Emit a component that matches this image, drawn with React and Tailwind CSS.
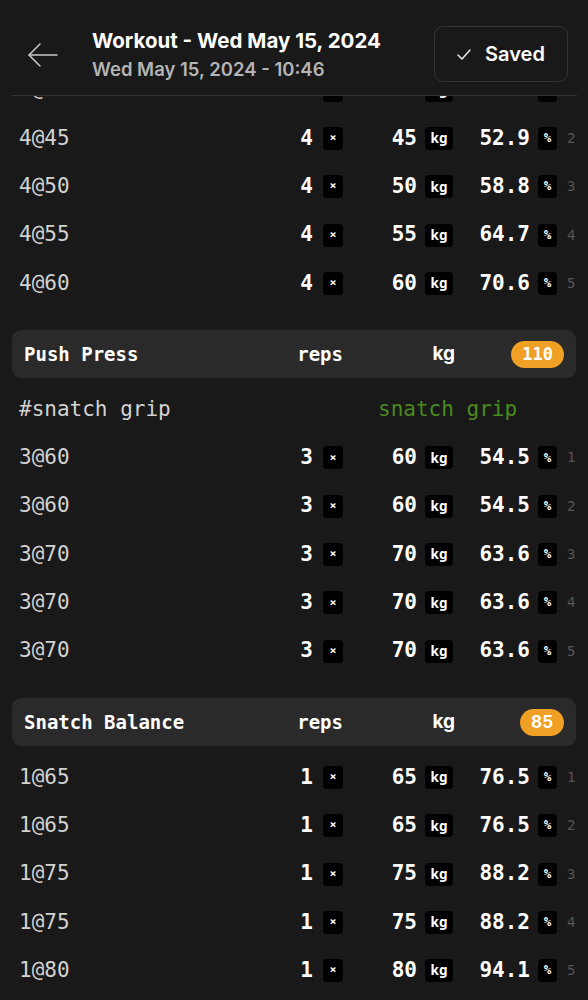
const mono = { fontFamily: '"DejaVu Sans Mono", "Liberation Mono", monospace' };

const sections = [
  {
    rows: [
      ["4@40", 4, 40, "47.1"],
      ["4@45", 4, 45, "52.9"],
      ["4@50", 4, 50, "58.8"],
      ["4@55", 4, 55, "64.7"],
      ["4@60", 4, 60, "70.6"],
    ],
  },
  {
    title: "Push Press",
    max: "110",
    pillMono: true,
    note: ["#snatch grip", "snatch grip"],
    rows: [
      ["3@60", 3, 60, "54.5"],
      ["3@60", 3, 60, "54.5"],
      ["3@70", 3, 70, "63.6"],
      ["3@70", 3, 70, "63.6"],
      ["3@70", 3, 70, "63.6"],
    ],
  },
  {
    title: "Snatch Balance",
    max: "85",
    rows: [
      ["1@65", 1, 65, "76.5"],
      ["1@65", 1, 65, "76.5"],
      ["1@75", 1, 75, "88.2"],
      ["1@75", 1, 75, "88.2"],
      ["1@80", 1, 80, "94.1"],
    ],
  },
];

function Badge({ children, className = "" }) {
  return (
    <span className={"flex h-[23px] items-center justify-center rounded-[4px] bg-black font-bold text-white " + className}>
      {children}
    </span>
  );
}

function SetRow({ label, reps, kg, pct, n }) {
  return (
    <div className="flex h-[48.3px] items-center pl-[19px] pr-[12px] pt-[4px]" style={mono}>
      <span className="flex-1 text-[21px] text-[#d2d2d2]">{label}</span>
      <div className="flex w-[100px] items-center justify-end gap-[10px]">
        <span className="text-[21px] font-bold text-white">{reps}</span>
        <Badge className="w-[20px] text-[11px]">×</Badge>
      </div>
      <div className="flex w-[110px] items-center justify-end gap-[8px]">
        <span className="text-[21px] font-bold text-white">{kg}</span>
        <Badge className="w-[28px] font-sans text-[13.5px]">kg</Badge>
      </div>
      <div className="flex w-[104px] items-center justify-end gap-[8px]">
        <span className="text-[21px] font-bold text-white">{pct}</span>
        <Badge className="w-[19px] text-[12.5px]">%</Badge>
      </div>
      <span className="ml-[10px] w-[9px] text-[14px] text-[#555]">{n}</span>
    </div>
  );
}

function SectionBar({ title, max, pillMono }) {
  return (
    <div className="mx-[12px] flex h-[48px] items-center rounded-[9px] bg-[#2a2a2a] px-[12px]">
      <span className="flex-1 text-[19px] font-bold text-white" style={mono}>{title}</span>
      <span className="w-[100px] text-right text-[19px] font-bold text-white" style={mono}>reps</span>
      <span className="w-[112px] text-right font-['Inter'] text-[19px] font-bold text-white">kg</span>
      <div className="flex w-[109px] justify-end">
        <span
          className={
            "flex h-[27px] items-center justify-center rounded-full bg-[#f0a024] px-[11px] text-[17px] font-bold text-white " +
            (pillMono ? "" : "font-['Inter'] min-w-[40px]")
          }
          style={pillMono ? mono : undefined}
        >
          {max}
        </span>
      </div>
    </div>
  );
}

export default function App() {
  return (
    <div className="flex h-[1000px] w-[588px] flex-col overflow-hidden bg-[#191919] font-['Inter',sans-serif]">
      <header className="shrink-0 bg-[#191919]">
        <div className="flex h-[95px] items-start pt-[26px]">
          <svg className="ml-[28px] mt-[17px]" width="30" height="24" viewBox="0 0 30 24" fill="none" stroke="#c8c8c8" strokeWidth="1.5" strokeLinecap="round" strokeLinejoin="round">
            <path d="M1 12H29" />
            <path d="M12 1L1 12L12 23" />
          </svg>
          <div className="ml-[34px] mt-[1px] flex-1">
            <div className="text-[20.5px] font-bold leading-[28px] text-white">Workout - Wed May 15, 2024</div>
            <div className="mt-[2px] text-[18.5px] font-semibold leading-[24px] text-[#b4b4b4]">Wed May 15, 2024 - 10:46</div>
          </div>
          <button className="mr-[20px] flex h-[56px] w-[134px] items-center justify-center gap-[14px] rounded-[9px] border border-[#353535] text-white">
            <svg width="14" height="11" viewBox="0 0 14 11" fill="none" stroke="#e8e8e8" strokeWidth="1.5" strokeLinecap="round" strokeLinejoin="round">
              <path d="M1 6L5 10L13 1" />
            </svg>
            <span className="text-[20px] font-semibold">Saved</span>
          </button>
        </div>
        <div className="mx-[11px] h-px bg-[#333]" />
      </header>

      <div className="min-h-0 flex-1 overflow-hidden">
        <div className="-mt-[32px]">
          {sections.map((s, i) => (
            <section key={i} className={i > 0 ? "mt-[25px]" : ""}>
              {s.title && <SectionBar title={s.title} max={s.max} pillMono={s.pillMono} />}
              <div className={s.title ? "mt-[5px]" : ""}>
                {s.note && (
                  <div className="flex h-[48.3px] items-center pl-[19px] pt-[4px] text-[21px]" style={mono}>
                    <span className="w-[359px] text-[#d2d2d2]">{s.note[0]}</span>
                    <span className="text-[#4b8a1f]">{s.note[1]}</span>
                  </div>
                )}
                {s.rows.map((r, j) => (
                  <SetRow key={j} label={r[0]} reps={r[1]} kg={r[2]} pct={r[3]} n={j + 1} />
                ))}
              </div>
            </section>
          ))}
        </div>
      </div>
    </div>
  );
}
